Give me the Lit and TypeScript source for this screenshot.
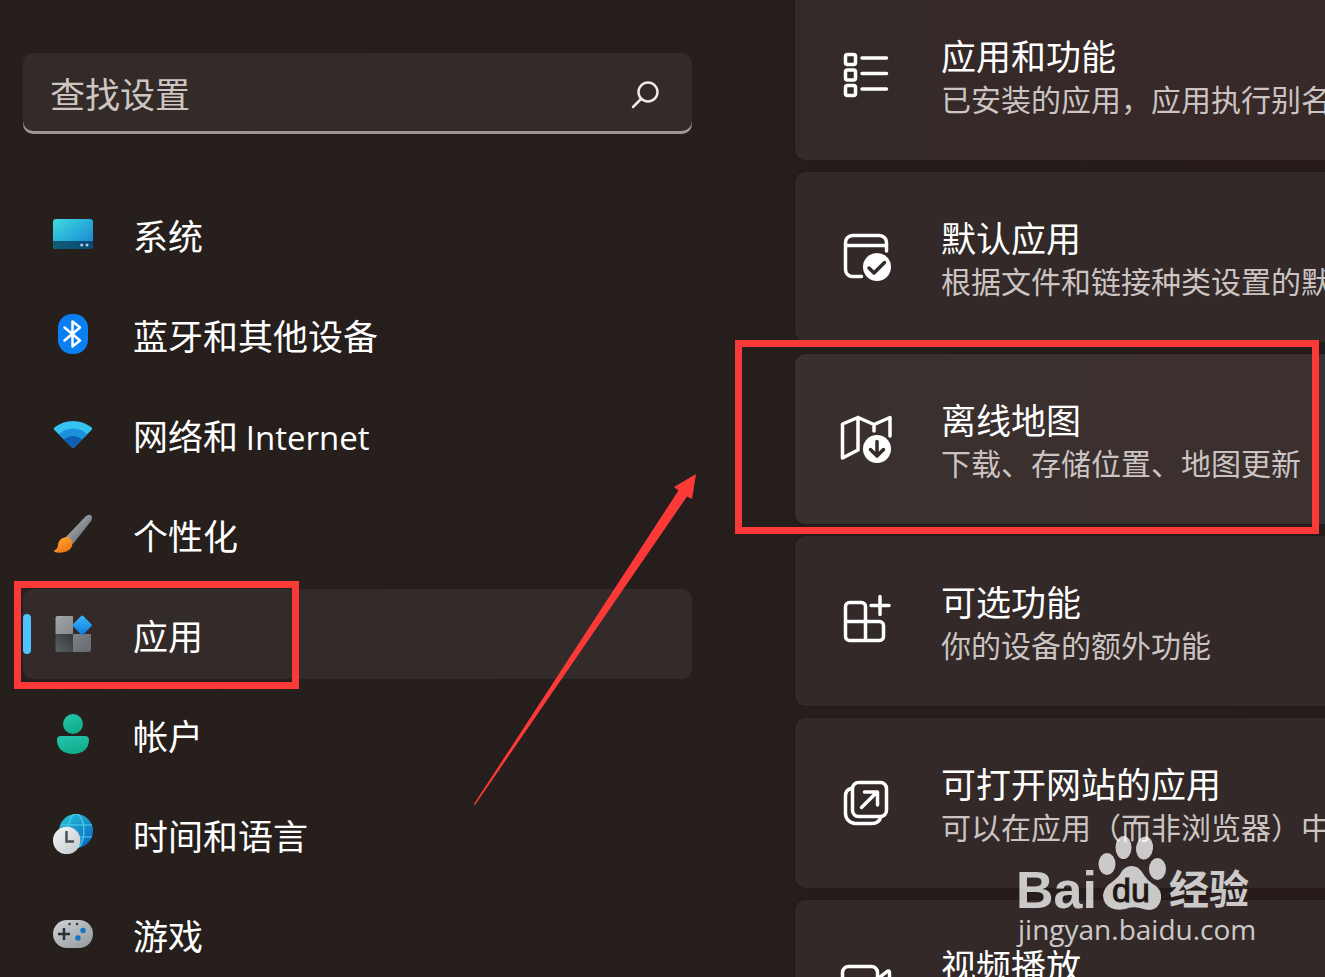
import { LitElement, html, svg, css } from "lit";
import { customElement } from "lit/decorators.js";
import { classMap } from "lit/directives/class-map.js";

const navIcons = {
  system: svg`
    <defs>
      <linearGradient id="sys" x1="0" y1="0" x2="1" y2="1"><stop offset="0" stop-color="#3fdbe0"/><stop offset="1" stop-color="#1480d0"/></linearGradient>
      <linearGradient id="sysb" x1="0" y1="0" x2="1" y2="0"><stop offset="0" stop-color="#0e6077"/><stop offset="1" stop-color="#0b4775"/></linearGradient>
    </defs>
    <rect y="5" width="40" height="30" rx="3" fill="url(#sys)"/>
    <path d="M0 27H40V32a3 3 0 0 1-3 3H3a3 3 0 0 1-3-3Z" fill="url(#sysb)"/>
    <circle cx="28.700" cy="31" r="1.500" fill="#a9cfe6"/><circle cx="34" cy="31" r="1.500" fill="#a9cfe6"/>`,
  bluetooth: svg`
    <rect x="5" width="30" height="40" rx="14" fill="#0a7ff2"/>
    <path d="M11.500 13.500 27 26.500 19.500 32.500V7.500L27 13.500 11.500 26.500" fill="none" stroke="#fff" stroke-width="2.500" stroke-linejoin="round" stroke-linecap="round"/>`,
  wifi: svg`
    <clipPath id="fan"><path d="M1 15.500Q0.500 14 2 13Q10 7 20 7T38 13Q39.500 14 39 15.500L21 33.500Q20 34.500 19 33.500Z"/></clipPath>
    <g clip-path="url(#fan)"><rect width="40" height="40" fill="#35c3f3"/><circle cx="20" cy="35" r="20.500" fill="#1b90dd"/><circle cx="20" cy="35" r="13" fill="#0e5fb3"/></g>`,
  brush: svg`
    <defs><linearGradient id="hdl" x1="0" y1="0" x2="1" y2="1"><stop offset="0.200" stop-color="#a5adb3"/><stop offset="0.800" stop-color="#697177"/></linearGradient>
    <linearGradient id="tip" x1="0" y1="0" x2="0.600" y2="1"><stop offset="0" stop-color="#ffae35"/><stop offset="1" stop-color="#ec7415"/></linearGradient></defs>
    <path d="M12.500 23.500 32.500 2.500Q36-0.500 38 1.500T38 7L20 30Z" fill="url(#hdl)"/>
    <path d="M11 23.500Q15 22 18 25.500T18 34Q14 39.500 4 38.500 0.500 38 1 36.500 5 35 5 30.500 6 25 11 23.500Z" fill="url(#tip)"/>`,
  apps: svg`
    <defs><linearGradient id="a1" x1="0" y1="0" x2="1" y2="1"><stop offset="0" stop-color="#a2a7ab"/><stop offset="1" stop-color="#85898d"/></linearGradient>
    <linearGradient id="a2" x1="1" y1="0" x2="0" y2="1"><stop offset="0" stop-color="#343a3f"/><stop offset="1" stop-color="#5a5f63"/></linearGradient>
    <linearGradient id="a3" x1="0" y1="0" x2="1" y2="1"><stop offset="0" stop-color="#7d8287"/><stop offset="1" stop-color="#666a6e"/></linearGradient>
    <linearGradient id="a4" x1="0" y1="0" x2="1" y2="1"><stop offset="0" stop-color="#3db9ff"/><stop offset="1" stop-color="#0b79dc"/></linearGradient></defs>
    <path d="M2.500 4a2 2 0 0 1 2-2H20V20H2.500Z" fill="url(#a1)"/>
    <path d="M2.500 20H20V38H4.500a2 2 0 0 1-2-2Z" fill="url(#a2)"/>
    <path d="M20 20H38V36a2 2 0 0 1-2 2H20Z" fill="url(#a3)"/>
    <rect x="22" y="4" width="14.500" height="14.500" rx="1.500" transform="rotate(45 29.200 11.200)" fill="url(#a4)"/>`,
  account: svg`
    <defs><linearGradient id="acc" x1="0" y1="0" x2="0.400" y2="1"><stop offset="0" stop-color="#26c6ad"/><stop offset="1" stop-color="#10ad8d"/></linearGradient></defs>
    <circle cx="20" cy="10" r="10" fill="url(#acc)"/>
    <path d="M8 22H32a4 4 0 0 1 4 4C36 35 29 40 20 40S4 35 4 26a4 4 0 0 1 4-4Z" fill="url(#acc)"/>`,
  time: svg`
    <defs><linearGradient id="glb" x1="0" y1="0" x2="0.700" y2="1"><stop offset="0" stop-color="#28c8d4"/><stop offset="1" stop-color="#0c68c4"/></linearGradient>
    <linearGradient id="clk" x1="0" y1="0" x2="1" y2="1"><stop offset="0" stop-color="#f4f5f6"/><stop offset="1" stop-color="#c4c8cb"/></linearGradient></defs>
    <circle cx="23" cy="17" r="17" fill="url(#glb)"/>
    <g fill="none" stroke="#4fd0ea" stroke-width="1.200"><path d="M8.500 11H39M8 23H39"/><ellipse cx="23" cy="17" rx="8" ry="17"/></g>
    <circle cx="13.700" cy="26.500" r="13.700" fill="url(#clk)"/>
    <path d="M13.500 17V27.500H21" fill="none" stroke="#4a4f54" stroke-width="2.500"/>`,
  game: svg`
    <defs><linearGradient id="pad" x1="0" y1="0" x2="1" y2="1"><stop offset="0" stop-color="#ced3d6"/><stop offset="1" stop-color="#92989c"/></linearGradient></defs>
    <rect y="6" width="40" height="28" rx="14" fill="url(#pad)"/>
    <path d="M11 14V26M5 20H17" stroke="#2b3035" stroke-width="2.500"/>
    <circle cx="16.500" cy="10" r="1.200" fill="#2b3035"/><circle cx="24" cy="10" r="1.200" fill="#2b3035"/>
    <circle cx="30" cy="16.500" r="2.700" fill="#1773c7"/><circle cx="25" cy="24" r="2.700" fill="#1773c7"/>`,
};

const cardIcons = {
  list: svg`<rect x="7.500" y="7.500" width="10" height="10" rx="2"/><rect x="7.500" y="23" width="10" height="10" rx="2"/><rect x="7.500" y="38.500" width="10" height="10" rx="2"/><path d="M24 11H48.500M24 26.500H48.500M24 42H48.500"/>`,
  check: svg`<path d="M23.500 47.500H14.500a7 7 0 0 1-7-7V13.500a7 7 0 0 1 7-7H41.500a7 7 0 0 1 7 7V22M8 16.500H48"/><circle cx="39" cy="38" r="14" fill="#fff" stroke="none"/><path class="ink" d="M31 39 36 44 46.500 33.500"/>`,
  map: svg`<path d="M4.500 13 20 6.500V39L4.500 47ZM20 6.500 36 13.500 52 6.500V25M36 13.500V20"/><circle cx="39" cy="38" r="14" fill="#fff" stroke="none"/><path class="ink" d="M39 30.500V45M32.500 38.500 39 45 45.500 38.500"/>`,
  addons: svg`<path d="M27.500 47.500H11.500a4 4 0 0 1-4-4V13.500a4 4 0 0 1 4-4H23.500a4 4 0 0 1 4 4V47.500H41.500a4 4 0 0 0 4-4V32.500a4 4 0 0 0-4-4H7.500M42 3.500V21.500M33 12.500H51"/>`,
  site: svg`<rect x="14.500" y="7.500" width="34" height="34" rx="6"/><path d="M13 13.500Q7.500 15 7.500 21V38.500a10 10 0 0 0 10 10H34Q41 48.500 42.500 42.500M23.500 32.500 39 17M26.500 17H39.500V30"/>`,
  video: svg`<rect x="4.500" y="9.500" width="35" height="36" rx="6"/><path d="M39.500 22 49 14.500Q51.500 13 51.500 16V39Q51.500 42 49 40.500L39.500 33"/>`,
};

const navItems = [
  { icon: navIcons.system, label: "系统" },
  { icon: navIcons.bluetooth, label: "蓝牙和其他设备" },
  { icon: navIcons.wifi, label: html`网络和 <span class="word">Internet</span>` },
  { icon: navIcons.brush, label: "个性化" },
  { icon: navIcons.apps, label: "应用", current: true },
  { icon: navIcons.account, label: "帐户" },
  { icon: navIcons.time, label: "时间和语言" },
  { icon: navIcons.game, label: "游戏" },
];

const cards = [
  { icon: cardIcons.list, title: "应用和功能", text: "已安装的应用，应用执行别名" },
  { icon: cardIcons.check, title: "默认应用", text: "根据文件和链接种类设置的默" },
  { icon: cardIcons.map, title: "离线地图", text: "下载、存储位置、地图更新", marked: true },
  { icon: cardIcons.addons, title: "可选功能", text: "你的设备的额外功能" },
  { icon: cardIcons.site, title: "可打开网站的应用", text: "可以在应用（而非浏览器）中" },
  { icon: cardIcons.video, title: "视频播放", text: "" },
];

@customElement("app-root")
export class AppRoot extends LitElement {
  static styles = css`
    :host {
      display: block;
      position: relative;
      height: 100vh;
      overflow: hidden;
      background: linear-gradient(90deg, #261f1c, #251e1c 55%, #281c1b);
      color: #fff;
      font-family: "Noto Sans CJK SC", sans-serif;
      font-size: 35px;
    }
    * { box-sizing: border-box; }
    .page {
      display: grid;
      grid-template-columns: minmax(0, 669fr) minmax(0, 530fr);
      column-gap: 103px;
      padding-left: 23px;
    }
    .side { padding-top: 53px; }
    .search {
      display: flex;
      align-items: center;
      height: 81px;
      padding: 0 28px 0 27px;
      border-radius: 10px;
      background: #342b29;
      box-shadow: inset 0 -3px #9d9793;
    }
    .field {
      flex: 1;
      min-width: 0;
      height: 100%;
      padding: 0 0 2px;
      border: 0;
      outline: 0;
      background: none;
      color: #fff;
      font: inherit;
    }
    .field::placeholder { color: #cdc7c4; opacity: 1; }
    .find {
      display: flex;
      padding: 0;
      border: 0;
      background: none;
    }
    .nav {
      display: flex;
      flex-direction: column;
      gap: 10px;
      margin-top: 55px;
    }
    .item {
      position: relative;
      display: flex;
      align-items: center;
      gap: 40px;
      height: 90px;
      padding-left: 30px;
      border-radius: 10px;
      color: #fff;
      text-decoration: none;
      white-space: nowrap;
    }
    .label { padding-top: 2px; line-height: 52px; }
    .word { font: 33px "Open Sans", sans-serif; }
    .current { background: #332b29; }
    .current::before {
      content: "";
      position: absolute;
      left: 0;
      top: 25px;
      width: 8px;
      height: 40px;
      border-radius: 4px;
      background: #4cc2ff;
    }
    .cards {
      display: flex;
      flex-direction: column;
      gap: 12px;
      margin-top: -10px;
    }
    .card {
      position: relative;
      display: flex;
      flex: none;
      gap: 47px;
      height: 170px;
      padding-left: 43px;
      border-radius: 10px 0 0 10px;
      background: #322928;
      box-shadow: 0 0 0 1px #211a18;
      color: #fff;
      text-decoration: none;
      white-space: nowrap;
    }
    .card:first-child { background: linear-gradient(90deg, #342b29, #362928 60%); }
    .marked { background: linear-gradient(90deg, #39302e, #3c302f); }
    .glyph {
      flex: none;
      margin-top: 57px;
      fill: none;
      stroke: #fff;
      stroke-width: 3.5;
      stroke-linecap: round;
      stroke-linejoin: round;
    }
    .ink { stroke: #342b29; }
    .copy { padding-top: 43px; }
    .title { line-height: 44px; }
    .text {
      color: #cbc4c2;
      font-size: 30px;
      line-height: 42px;
    }
    .frame {
      position: absolute;
      border: 7px solid #f93a39;
    }
    .frame-nav { left: -9px; top: -8px; width: 285px; height: 108px; }
    .frame-card { left: -60px; right: 6px; top: -14px; bottom: -10px; }
    .arrow { position: absolute; left: 474px; top: 474px; }
    .mark { position: absolute; left: 1010px; top: 830px; fill: #fff; opacity: 0.75; }
    .latin { font: bold 52px "Liberation Sans", sans-serif; }
    .du { font: 34px "Liberation Sans", sans-serif; fill: #1c1312; stroke: #1c1312; }
    .han { font: bold 40px "Noto Sans CJK SC", sans-serif; }
    .url { font: 500 28px "Open Sans", sans-serif; }
  `;

  render() {
    return html`
      <div class="page">
        <div class="side">
          <form class="search" @submit=${(e: Event) => e.preventDefault()}>
            <input class="field" type="text" aria-label="查找设置" placeholder="查找设置" />
            <button class="find" aria-label="查找">
              <svg width="36" height="36" viewBox="0 0 36 36" fill="none" stroke="#eeeae8" stroke-width="2.500" stroke-linecap="round">
                <circle cx="20" cy="16" r="9.500" /><path d="M13 23 5 31" />
              </svg>
            </button>
          </form>
          <nav class="nav">
            ${navItems.map((item) => html`
              <a href="#" class=${classMap({ item: true, current: !!item.current })}>
                <svg width="40" height="40" viewBox="0 0 40 40" aria-hidden="true">${item.icon}</svg>
                <span class="label">${item.label}</span>
                ${item.current ? html`<span class="frame frame-nav"></span>` : ""}
              </a>`)}
          </nav>
        </div>
        <main class="cards">
          ${cards.map((card) => html`
            <a href="#" class=${classMap({ card: true, marked: !!card.marked })}>
              <svg class="glyph" width="56" height="56" viewBox="0 0 56 56" aria-hidden="true">${card.icon}</svg>
              <div class="copy">
                <div class="title">${card.title}</div>
                <div class="text">${card.text}</div>
              </div>
              ${card.marked ? html`<span class="frame frame-card"></span>` : ""}
            </a>`)}
        </main>
      </div>
      <svg class="arrow" width="223" height="332" viewBox="0 0 223 332" aria-hidden="true">
        <path d="M222 0 218 25 213 22.500 1 331 0 330 204.500 16.500 200 13Z" fill="#fb3a38" />
      </svg>
      <svg class="mark" width="260" height="125" viewBox="0 0 260 125">
        <text class="latin" x="6" y="78">Bai</text>
        <ellipse cx="97" cy="34" rx="8.500" ry="11" />
        <ellipse cx="113.500" cy="17.500" rx="8" ry="11.500" />
        <ellipse cx="134.500" cy="18" rx="8.500" ry="11.500" transform="rotate(8 134.500 18)" />
        <ellipse cx="147.500" cy="39" rx="8.500" ry="11" />
        <path d="M122 36Q128 36 132 42 137 51 146 56 152 61 151 69 149 79 140 80 135 80 130 78 122 76 115 79 107 81 101 78 93 74 93 65 94 57 102 52 109 47 112 41 116 36 122 36Z" />
        <text class="du" x="102" y="72">du</text>
        <text class="han" x="159" y="74">经验</text>
        <text class="url" x="8" y="110">jingyan.baidu.com</text>
      </svg>
    `;
  }
}
